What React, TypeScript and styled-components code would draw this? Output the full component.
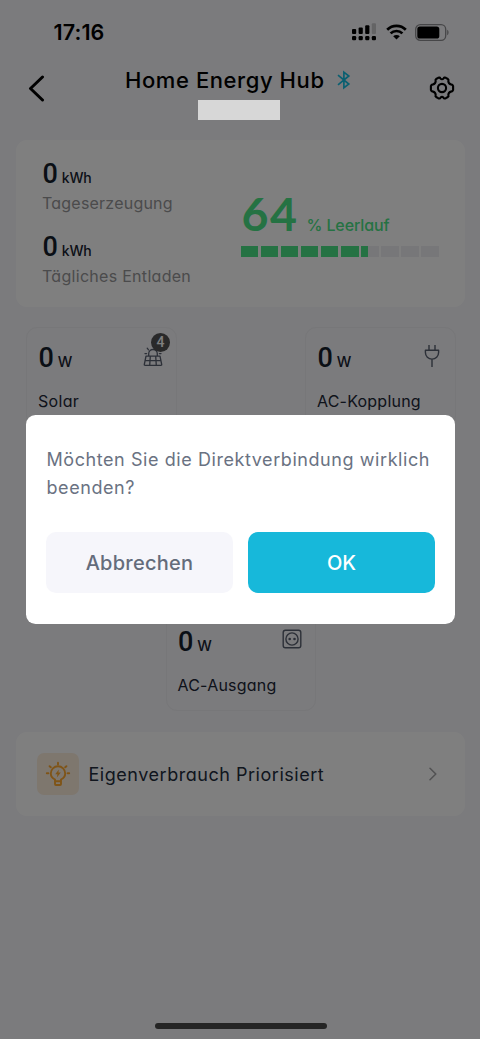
import React from "react";
import styled, { createGlobalStyle } from "styled-components";

const GlobalStyle = createGlobalStyle`
  *, *::before, *::after { box-sizing: border-box; }
  html, body { margin: 0; padding: 0; background: #f6f6fa; }
  body { font-family: Inter, "Liberation Sans", sans-serif; font-feature-settings: "cv11"; }
  p, h1 { margin: 0; }
`;

const Screen = styled.div`
  position: relative;
  width: 480px;
  height: 1039px;
  overflow: hidden;
  display: flex;
  flex-direction: column;
  background: #f6f6fa;
`;

interface TextProps {
  $size: number;
  $line: number;
  $weight?: number;
  $track?: number;
  $color?: string;
}

const Text = styled.span<TextProps>`
  display: block;
  white-space: nowrap;
  font-size: ${(p) => p.$size}px;
  line-height: ${(p) => p.$line}px;
  font-weight: ${(p) => p.$weight ?? 400};
  letter-spacing: ${(p) => p.$track ?? 0}px;
  color: ${(p) => p.$color ?? "#222c3c"};
`;

const StatusBar = styled.div`
  height: 64px;
  padding: 0 31px 0 53.5px;
  display: flex;
  align-items: center;
  justify-content: space-between;
`;

const StatusIcons = styled.div`
  display: flex;
  align-items: center;
  gap: 8.5px;
`;

const Header = styled.header`
  height: 75.5px;
  padding: 0 25px 0 27px;
  display: grid;
  grid-template-columns: 40px 1fr 40px;
`;

const HeaderSide = styled.div<{ $end?: boolean }>`
  display: flex;
  height: 48px;
  align-items: center;
  justify-content: ${(p) => (p.$end ? "flex-end" : "flex-start")};
`;

const HeaderCenter = styled.div`
  display: flex;
  flex-direction: column;
  padding-left: 58px;
`;

const TitleRow = styled.div`
  display: flex;
  align-items: center;
  height: 32px;
  gap: 12px;
`;

const SerialMask = styled.div`
  position: relative;
  z-index: 30;
  width: 82px;
  height: 20px;
  margin: 4px 0 0 73px;
  background: #d7d7d7;
`;

const Panel = styled.section<{ $height: number }>`
  flex: none;
  height: ${(p) => p.$height}px;
  margin: 0 15px 0 16px;
  border-radius: 11px;
  background: #fff;
  display: flex;
`;

const Totals = styled.div`
  width: 224.5px;
  padding: 19.5px 0 0 26px;
  display: flex;
  flex-direction: column;
  gap: 15px;
`;

const Amount = styled.div`
  display: flex;
  align-items: baseline;
  gap: 4px;
  height: 31px;
`;

const Digits = styled.span`
  font-family: Roboto, sans-serif;
  font-weight: 500;
  font-size: 27px;
  line-height: 31px;
  margin-left: 0.5px;
  color: #141e2d;
`;

const Battery = styled.div`
  padding-top: 45.5px;
  display: flex;
  flex-direction: column;
`;

const Charge = styled.div`
  display: flex;
  align-items: baseline;
  gap: 8px;
  height: 61px;
  padding-left: 1px;
`;

const ChargeValue = styled.span`
  font-family: Lato, sans-serif;
  font-weight: 700;
  font-size: 46.5px;
  line-height: 56px;
  letter-spacing: 1.5px;
  color: #4ae486;
`;

const Cells = styled.div`
  display: grid;
  grid-template-columns: repeat(10, 17.6px);
  column-gap: 2.5px;
`;

const Cell = styled.div<{ $fill: number }>`
  height: 10.5px;
  background: linear-gradient(
    to right,
    #4ae486 ${(p) => p.$fill}%,
    #eeeef2 ${(p) => p.$fill}%
  );
`;

const Flow = styled.div`
  flex: none;
  height: 425.5px;
  padding: 20.5px 24.5px 21px 26px;
  display: flex;
  flex-direction: column;
  justify-content: space-between;
`;

const FlowRow = styled.div<{ $center?: boolean }>`
  display: flex;
  justify-content: ${(p) => (p.$center ? "center" : "space-between")};
`;

const DeviceCard = styled.div`
  width: 150.5px;
  height: 100px;
  padding: 15px 13px 0 11px;
  border: 1.5px solid #eeeef2;
  border-radius: 11px;
`;

const DeviceTop = styled.div`
  display: flex;
  justify-content: space-between;
  height: 44px;
`;

const DeviceIcon = styled.div<{ $inset?: number; $height?: number }>`
  position: relative;
  height: ${(p) => p.$height ?? 27}px;
  margin-right: ${(p) => p.$inset ?? 0}px;
  display: flex;
  align-items: center;
`;

const Badge = styled.span`
  position: absolute;
  left: 8.5px;
  top: -10px;
  width: 19px;
  height: 19px;
  border-radius: 50%;
  background: #525254;
  color: #fff;
  font: 500 14px/19px Roboto, sans-serif;
  text-align: center;
`;

const ModeIcon = styled.div`
  width: 42px;
  height: 42px;
  border-radius: 7px;
  background: #fceedd;
  display: flex;
  align-items: center;
  justify-content: center;
`;

const ModeContent = styled.div`
  flex: 1;
  display: flex;
  align-items: center;
  padding: 0 27px 0 20.5px;
  gap: 10px;
`;

const ModeLabel = styled(Text)`
  padding-top: 1px;
`;

const Push = styled.div`
  margin-left: auto;
  display: flex;
`;

const Overlay = styled.div`
  position: absolute;
  inset: 0;
  z-index: 20;
  background: rgba(0, 0, 0, 0.5);
  display: flex;
  align-items: center;
  padding: 0 25px 0 26px;
`;

const Dialog = styled.div`
  width: 429px;
  height: 209px;
  padding: 31px 20px 0;
  border-radius: 9.5px;
  background: #fff;
`;

const Message = styled.p`
  padding-left: 0.5px;
  height: 86px;
  white-space: nowrap;
  font-size: 18px;
  line-height: 27.5px;
  letter-spacing: 0.57px;
  color: #6a7282;
`;

const Actions = styled.div`
  display: grid;
  grid-template-columns: 1fr 1fr;
  gap: 15px;
`;

const ActionButton = styled.button<{ $primary?: boolean }>`
  height: 61px;
  border: 0;
  border-radius: 10px;
  padding: 0;
  font: 500 20px/24px Inter, "Liberation Sans", sans-serif;
  font-feature-settings: "cv11";
  letter-spacing: ${(p) => (p.$primary ? 0 : 0.25)}px;
  background: ${(p) => (p.$primary ? "#17b8da" : "#f6f6fb")};
  color: ${(p) => (p.$primary ? "#fff" : "#646c7b")};
`;

const HomeIndicator = styled.div`
  position: absolute;
  left: 155px;
  bottom: 10px;
  width: 171.5px;
  height: 6px;
  border-radius: 3px;
  background: #4b4b4b;
`;

const SignalIcon = () => (
  <svg width="25" height="18" viewBox="0 0 25 18">
    <g fill="#000">
      <rect x="0" y="6" width="4.2" height="5" rx="1" />
      <rect x="6.6" y="4.5" width="4.2" height="6.5" rx="1" />
      <rect x="13.2" y="2.2" width="4.2" height="8.8" rx="1" />
      <rect x="0" y="13" width="4.2" height="4.2" rx="1.2" />
      <rect x="6.6" y="13" width="4.2" height="4.2" rx="1.2" />
      <rect x="13.2" y="13" width="4.2" height="4.2" rx="1.2" />
      <rect x="19.8" y="13" width="4.2" height="4.2" rx="1.2" />
    </g>
    <rect x="19.8" y="0.3" width="4.2" height="10.7" rx="1" fill="#c8c8cb" />
  </svg>
);

const WifiIcon = () => (
  <svg width="21" height="16" viewBox="0 0 21 16">
    <g fill="none" stroke="#000" strokeWidth="2.7">
      <path d="M1.2 5.8a13.2 13.2 0 0 1 18.6 0" />
      <path d="M4.6 9.4a8.4 8.4 0 0 1 11.8 0" />
    </g>
    <path d="M10.5 15.6 7.2 12.3a4.7 4.7 0 0 1 6.6 0z" fill="#000" />
  </svg>
);

const BatteryIcon = () => (
  <svg width="34" height="17" viewBox="0 0 34 17">
    <rect x="0.7" y="0.7" width="30" height="15.6" rx="4.6" fill="none" stroke="#8d8d90" strokeWidth="1.3" />
    <rect x="2.3" y="2.5" width="22" height="12" rx="2.6" fill="#000" />
    <path d="M32.2 5.8c1.8.6 1.8 4.8 0 5.4z" fill="#8d8d90" />
  </svg>
);

const BackIcon = () => (
  <svg width="18" height="27" viewBox="0 0 18 27" fill="none" stroke="#000" strokeWidth="3" strokeLinecap="round" strokeLinejoin="round">
    <path d="M15.5 2 3.5 13.5l12 11.5" />
  </svg>
);

const BluetoothIcon = () => (
  <svg width="14" height="20" viewBox="0 0 14 20" fill="none" stroke="#14bfe2" strokeWidth="1.7" strokeLinejoin="miter">
    <path d="M1 5.2 11.8 14 6.9 17.8V2.2L11.8 6 1 14.8" />
  </svg>
);

const GearIcon = () => (
  <svg width="26" height="26" viewBox="0 0 26 26" fill="none" stroke="#000" strokeWidth="2.1" strokeLinejoin="round">
    <path d="M9.2 2.8Q11 2 11.3 3.4Q13 5.2 14.7 3.4Q15.1 2 16.8 2.8L18.9 4Q20 4.8 19.3 6.1Q19.5 8.9 22 9.4Q23.7 9.5 24.1 11V15Q23.7 16.5 22 16.6Q19.5 17.1 19.3 19.9Q20 21.2 18.9 22L16.8 23.2Q15.1 24 14.4 22.6Q13 21.3 11.6 22.6Q10.9 24 9.2 23.2L7.1 22Q6 21.2 6.7 19.9Q6.5 17.1 4 16.6Q2.3 16.5 1.9 15V11Q2.3 9.5 4 9.4Q6.5 8.9 6.7 6.1Q6 4.8 7.1 4Z" />
    <circle cx="13" cy="13" r="4.1" />
  </svg>
);

const SolarIcon = () => (
  <svg width="20" height="20" viewBox="0 0 20 20" fill="none" stroke="#596070" strokeWidth="1.3" strokeLinejoin="round">
    <path d="M3 9.2h14l1.7 8.3q.1.9-.8.9H2.1q-.9 0-.8-.9zM2.2 13.6h15.6M7.3 9.2l-.6 9.2M12.7 9.2l.6 9.2" />
    <path d="M5.7 9V6.8a4.3 4.3 0 0 1 8.6 0V9" />
    <path d="M5.5 2.8 4.2 1.2M3.6 6.6H2M18 6.6h-1.6" strokeLinecap="round" />
  </svg>
);

const PlugIcon = () => (
  <svg width="16" height="24" viewBox="0 0 16 24" fill="none" stroke="#596070" strokeWidth="1.4" strokeLinejoin="round">
    <path d="M1.4 6.2h13.2v2.3a6.6 6.6 0 0 1-13.2 0zM5 6V1M11 6V1M8 15.2v7.9" />
  </svg>
);

const SocketIcon = () => (
  <svg width="20" height="20" viewBox="0 0 20 20" fill="none" stroke="#596070" strokeWidth="1.4">
    <rect x="1.2" y="1.2" width="17.6" height="17.6" rx="2.2" />
    <circle cx="10" cy="10" r="6.1" />
    <circle cx="7.7" cy="10" r="1.3" fill="#596070" stroke="none" />
    <circle cx="12.5" cy="10" r="1.3" fill="#596070" stroke="none" />
  </svg>
);

const BulbIcon = () => (
  <svg width="26" height="26" viewBox="0 0 26 26" fill="none" stroke="#ffa92f" strokeWidth="1.9" strokeLinecap="round" strokeLinejoin="round">
    <path d="M10 20.3v-1.8C7.3 17 5.8 15 5.8 12.4a7.2 7.2 0 0 1 14.4 0c0 2.6-1.5 4.6-4.2 6.1v1.8zM10 20.5v2.6q0 .9.9.9h4.2q.9 0 .9-.9v-2.6" />
    <path d="M13 1.8v1.8M1.8 12.2h1.6M22.6 12.2h1.6M4.6 5.2l1.2 1.1M21.4 5.2l-1.2 1.1" />
    <path d="M13.9 8.4 10.2 13.2h2.2l-.5 3.4 3.9-5h-2.4z" fill="#ffa92f" stroke="none" />
  </svg>
);

const ChevronIcon = () => (
  <svg width="10" height="16" viewBox="0 0 10 16" fill="none" stroke="#a4a4a6" strokeWidth="1.6" strokeLinecap="round" strokeLinejoin="round">
    <path d="m2 2.3 5.8 5.7L2 13.7" />
  </svg>
);

const Total = ({ label, track }: { label: string; track: number }) => (
  <div>
    <Amount>
      <Digits>0</Digits>
      <Text $size={14} $line={20} $weight={500} $track={-0.3} $color="#182231">kWh</Text>
    </Amount>
    <Text $size={16} $line={27} $track={track} $color="#969698">{label}</Text>
  </div>
);

interface DeviceProps {
  label: string;
  track: number;
  inset?: number;
  iconHeight?: number;
  children: React.ReactNode;
}

const Device = ({ label, track, inset, iconHeight, children }: DeviceProps) => (
  <DeviceCard>
    <DeviceTop>
      <Amount>
        <Digits>0</Digits>
        <Text $size={14.5} $line={20} $weight={500} $color="#182231">W</Text>
      </Amount>
      <DeviceIcon $inset={inset} $height={iconHeight}>{children}</DeviceIcon>
    </DeviceTop>
    <Text $size={16} $line={28} $track={track} $color="#1c2636">{label}</Text>
  </DeviceCard>
);

const CHARGE = 64;

export default function App() {
  return (
    <>
      <GlobalStyle />
      <Screen>
        <StatusBar>
          <Text $size={21.5} $line={26} $weight={600} $track={0.1} $color="#000">17:16</Text>
          <StatusIcons>
            <SignalIcon />
            <WifiIcon />
            <BatteryIcon />
          </StatusIcons>
        </StatusBar>
        <Header>
          <HeaderSide><BackIcon /></HeaderSide>
          <HeaderCenter>
            <TitleRow>
              <Text as="h1" $size={22} $line={32} $weight={500} $track={0.58} $color="#000">Home Energy Hub</Text>
              <BluetoothIcon />
            </TitleRow>
            <SerialMask />
          </HeaderCenter>
          <HeaderSide $end><GearIcon /></HeaderSide>
        </Header>
        <Panel $height={167}>
          <Totals>
            <Total label="Tageserzeugung" track={0.22} />
            <Total label="Tägliches Entladen" track={0.29} />
          </Totals>
          <Battery>
            <Charge>
              <ChargeValue>{CHARGE}</ChargeValue>
              <Text $size={16} $line={24} $weight={500} $track={-0.1} $color="#4ae486">% Leerlauf</Text>
            </Charge>
            <Cells>
              {Array.from({ length: 10 }, (_, i) => (
                <Cell key={i} $fill={Math.max(0, Math.min(100, (CHARGE - i * 10) * 10))} />
              ))}
            </Cells>
          </Battery>
        </Panel>
        <Flow>
          <FlowRow>
            <Device label="Solar" track={0.3}>
              <SolarIcon />
              <Badge>4</Badge>
            </Device>
            <Device label="AC-Kopplung" track={0.22} inset={2} iconHeight={25}><PlugIcon /></Device>
          </FlowRow>
          <FlowRow $center>
            <Device label="AC-Ausgang" track={0.22} iconHeight={24}><SocketIcon /></Device>
          </FlowRow>
        </Flow>
        <Panel $height={84}>
          <ModeContent>
            <ModeIcon><BulbIcon /></ModeIcon>
            <ModeLabel $size={18} $line={26} $track={0.53} $color="#222c3c">Eigenverbrauch Priorisiert</ModeLabel>
            <Push><ChevronIcon /></Push>
          </ModeContent>
        </Panel>
        <HomeIndicator />
        <Overlay>
          <Dialog role="dialog">
            <Message>
              Möchten Sie die Direktverbindung wirklich
              <br />
              beenden?
            </Message>
            <Actions>
              <ActionButton>Abbrechen</ActionButton>
              <ActionButton $primary>OK</ActionButton>
            </Actions>
          </Dialog>
        </Overlay>
      </Screen>
    </>
  );
}
